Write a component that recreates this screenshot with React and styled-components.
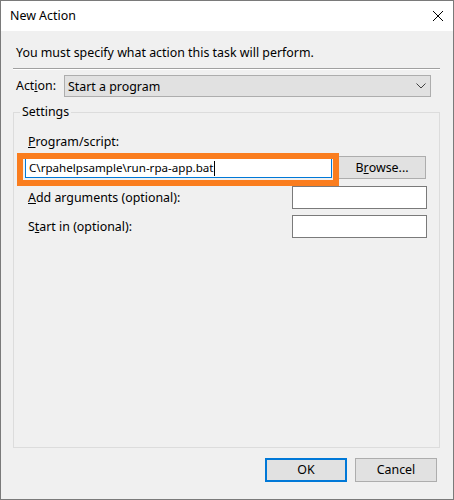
import styled, { createGlobalStyle } from "styled-components";

const GlobalStyle = createGlobalStyle`
    * {
        box-sizing: border-box;
    }
    body {
        margin: 0;
        background: #f0f0f0;
        font-family: "Noto Sans", "Open Sans", sans-serif;
        font-size: 12.4px;
        color: #000;
    }
`;

const Window = styled.div`
    width: 454px;
    height: 500px;
    border: 1px solid #7a7a7a;
    background: #f0f0f0;
    display: flex;
    flex-direction: column;
`;

const TitleBar = styled.div`
    height: 30px;
    background: #fff;
    display: flex;
    align-items: center;
    justify-content: space-between;
    padding-left: 9px;
    padding-right: 10px;
    line-height: 16px;
`;

const CloseButton = styled.div`
    width: 10px;
    height: 10px;
    display: flex;
`;

const Body = styled.div`
    flex: 1;
    display: flex;
    flex-direction: column;
    padding: 0 13px 0 12px;
`;

const Message = styled.div`
    margin-top: 14px;
    padding-left: 3px;
    line-height: 16px;
`;

const Separator = styled.div`
    margin-top: 7px;
    height: 2px;
    border-top: 1px solid #a0a0a0;
    border-bottom: 1px solid #fff;
`;

const ActionRow = styled.div`
    margin-top: 5px;
    display: flex;
    align-items: center;
    height: 22px;
`;

const ActionLabel = styled.span`
    width: 51px;
    padding-left: 3px;
    line-height: 16px;
`;

const Combo = styled.div`
    width: 367px;
    height: 22px;
    border: 1px solid #adadad;
    background: #e1e1e1;
    display: flex;
    align-items: center;
    justify-content: space-between;
    padding: 0 4px 0 3px;
`;

const GroupBox = styled.fieldset`
    flex: 1;
    margin: 7px 0 0 0;
    border: 1px solid #dcdcdc;
    padding: 14px 12px 0 11px;
    min-width: 0;
`;

const Legend = styled.legend`
    padding: 0 2px;
    margin-left: -5px;
    line-height: 16px;
`;

const FieldLabel = styled.div`
    padding-left: 3px;
    line-height: 16px;
    height: 16px;
`;

const PathRow = styled.div`
    position: relative;
    margin-top: 6px;
    display: flex;
    align-items: flex-start;
    height: 23px;
`;

const PathBox = styled.div`
    margin-top: 2px;
    width: 307px;
    height: 20px;
    border: 1px solid #0078d7;
    background: #fff;
    display: flex;
    align-items: center;
    padding-left: 3px;
    line-height: 16px;
    white-space: nowrap;
    font-size: 11.6px;
`;

const Caret = styled.span`
    display: inline-block;
    width: 1px;
    height: 15px;
    background: #000;
    margin-left: 1px;
`;

const Highlight = styled.div`
    position: absolute;
    left: -8px;
    top: -3px;
    width: 322px;
    height: 33px;
    border: 6px solid #fa7d1e;
    pointer-events: none;
`;

const Button = styled.div`
    height: ${(p) => p.$h || 24}px;
    width: ${(p) => p.$w || 82}px;
    background: #e1e1e1;
    border: ${(p) => (p.$default ? "2px solid #0078d7" : "1px solid #adadad")};
    display: flex;
    align-items: center;
    justify-content: center;
    line-height: 16px;
`;

const BrowseButton = styled(Button)`
    margin-left: auto;
    margin-right: 1px;
`;

const OptionRow = styled.div`
    margin-top: ${(p) => p.$top}px;
    display: flex;
    align-items: center;
    justify-content: space-between;
    height: 23px;
`;

const TextBox = styled.div`
    width: 135px;
    height: 23px;
    border: 1px solid #7a7a7a;
    background: #fff;
`;

const Footer = styled.div`
    display: flex;
    justify-content: flex-end;
    gap: 8px;
    padding: 10px 16px 17px 0;
`;

function Chevron() {
    return (
        <svg width="10" height="6" viewBox="0 0 10 6">
            <path d="M0.5 0.5 L5 5 L9.5 0.5" fill="none" stroke="#404040" strokeWidth="1" />
        </svg>
    );
}

function CloseIcon() {
    return (
        <svg width="10" height="10" viewBox="0 0 10 10">
            <path d="M0 0 L10 10 M10 0 L0 10" stroke="#000" strokeWidth="1" />
        </svg>
    );
}

export default function App() {
    return (
        <>
            <GlobalStyle />
            <Window>
                <TitleBar>
                    <span>New Action</span>
                    <CloseButton>
                        <CloseIcon />
                    </CloseButton>
                </TitleBar>
                <Body>
                    <Message>You must specify what action this task will perform.</Message>
                    <Separator />
                    <ActionRow>
                        <ActionLabel>
                            Act<u>i</u>on:
                        </ActionLabel>
                        <Combo>
                            <span>Start a program</span>
                            <Chevron />
                        </Combo>
                    </ActionRow>
                    <GroupBox>
                        <Legend>Settings</Legend>
                        <FieldLabel>
                            <u>P</u>rogram/script:
                        </FieldLabel>
                        <PathRow>
                            <PathBox>
                                C\rpahelpsample\run-rpa-app.bat
                                <Caret />
                            </PathBox>
                            <BrowseButton $w={88} $h={23}>
                                B<u>r</u>owse...
                            </BrowseButton>
                            <Highlight />
                        </PathRow>
                        <OptionRow $top={7}>
                            <FieldLabel>
                                <u>A</u>dd arguments (optional):
                            </FieldLabel>
                            <TextBox />
                        </OptionRow>
                        <OptionRow $top={6}>
                            <FieldLabel>
                                S<u>t</u>art in (optional):
                            </FieldLabel>
                            <TextBox />
                        </OptionRow>
                    </GroupBox>
                </Body>
                <Footer>
                    <Button $default>OK</Button>
                    <Button>Cancel</Button>
                </Footer>
            </Window>
        </>
    );
}
